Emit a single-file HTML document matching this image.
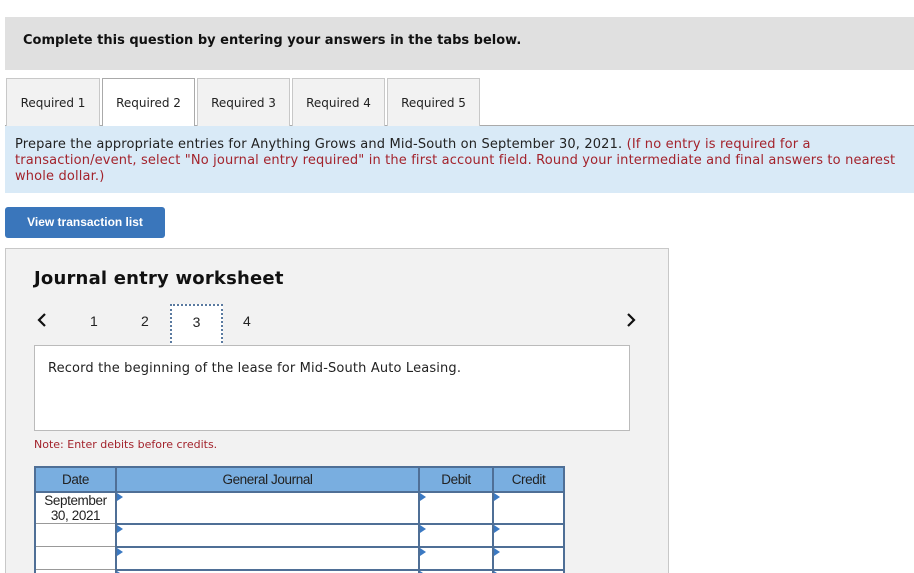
<!DOCTYPE html>
<html><head><meta charset="utf-8"><style>
*{margin:0;padding:0;box-sizing:border-box}
html,body{width:914px;height:573px;overflow:hidden}
body{background:#fff;font-family:"DejaVu Sans","Liberation Sans",sans-serif;position:relative;color:#222}
.a{position:absolute}
.tab{position:absolute;top:78px;height:48px;border:1px solid #c8c8c8;border-bottom:none;background:#f2f2f2;font-size:12px;line-height:48px;text-align:center;color:#222}
.ar{font-family:"Liberation Sans",Arial,sans-serif}
td{border:2px solid #4f6f96;padding:0;position:relative}
.tri{position:absolute;left:0;top:0;width:0;height:0;border-left:6px solid #3b79c2;border-top:4px solid transparent;border-bottom:4px solid transparent}
</style></head><body>
<div class="a" style="left:5px;top:17px;width:909px;height:53px;background:#e0e0e0"></div>
<div class="a" style="left:23px;top:33px;font-size:13px;font-weight:bold;color:#111">Complete this question by entering your answers in the tabs below.</div>
<div class="a" style="left:5px;top:125px;width:909px;height:1px;background:#aaa"></div>
<div class="tab" style="left:6px;width:94px">Required 1</div>
<div class="tab" style="left:102px;width:93px;background:#fff;height:49px;border-color:#aaa">Required 2</div>
<div class="tab" style="left:197px;width:93px">Required 3</div>
<div class="tab" style="left:292px;width:93px">Required 4</div>
<div class="tab" style="left:387px;width:93px">Required 5</div>
<div class="a" style="left:5px;top:126px;width:909px;height:67px;background:#d9eaf7"></div>
<div class="a" style="left:15px;top:137px;width:895px;font-size:13px;line-height:16px;color:#222;letter-spacing:0.15px">Prepare the appropriate entries for Anything Grows and Mid-South on September 30, 2021. <span style="color:#a3232c">(If no entry is required for a transaction/event, select "No journal entry required" in the first account field. Round your intermediate and final answers to nearest whole dollar.)</span></div>
<div class="a ar" style="left:5px;top:207px;width:160px;height:31px;background:#3a76bb;border-radius:3px;color:#fff;font-weight:bold;font-size:12px;line-height:30px;text-align:center">View transaction list</div>
<div class="a" style="left:5px;top:248px;width:664px;height:340px;background:#f2f2f2;border:1px solid #c8c8c8"></div>
<div class="a" style="left:34px;top:268px;font-size:18px;font-weight:bold;color:#111;letter-spacing:0.2px">Journal entry worksheet</div>
<svg class="a" style="left:36px;top:312px" width="12" height="16"><path d="M9 2 L3 8 L9 14" stroke="#111" stroke-width="2.2" fill="none"/></svg>
<svg class="a" style="left:625px;top:312px" width="12" height="16"><path d="M3 2 L9 8 L3 14" stroke="#111" stroke-width="2.2" fill="none"/></svg>
<div class="a ar" style="left:90px;top:313px;font-size:14px">1</div>
<div class="a ar" style="left:141px;top:313px;font-size:14px">2</div>
<div class="a ar" style="left:170px;top:304px;width:53px;height:43px;border:2px dotted #5a7aa0;background:#fff;font-size:14px;text-align:center;line-height:32px">3</div>
<div class="a ar" style="left:243px;top:313px;font-size:14px">4</div>
<div class="a" style="left:34px;top:345px;width:596px;height:86px;background:#fff;border:1px solid #bbb"></div>
<div class="a" style="left:48px;top:361px;font-size:13px;letter-spacing:0.15px">Record the beginning of the lease for Mid-South Auto Leasing.</div>
<div class="a" style="left:34px;top:438px;font-size:11px;color:#a3232c">Note: Enter debits before credits.</div>
<table class="a ar" style="left:34px;top:466px;border-collapse:collapse;font-size:13.5px;letter-spacing:-0.4px;color:#222">
<tr style="background:#79aee0;height:25px;text-align:center"><td style="width:81px">Date</td><td style="width:303px">General Journal</td><td style="width:74px">Debit</td><td style="width:71px">Credit</td></tr>
<tr style="height:31px;background:#fff"><td style="text-align:center;line-height:15px;border:1px solid #999;border-left:2px solid #4f6f96">September<br>30, 2021</td><td><span class="tri"></span></td><td><span class="tri"></span></td><td><span class="tri"></span></td></tr>
<tr style="height:23px;background:#fff"><td style="border:1px solid #999;border-left:2px solid #4f6f96"></td><td><span class="tri"></span></td><td><span class="tri"></span></td><td><span class="tri"></span></td></tr>
<tr style="height:23px;background:#fff"><td style="border:1px solid #999;border-left:2px solid #4f6f96"></td><td><span class="tri"></span></td><td><span class="tri"></span></td><td><span class="tri"></span></td></tr>
<tr style="height:23px;background:#fff"><td style="border:1px solid #999;border-left:2px solid #4f6f96"></td><td><span class="tri"></span></td><td><span class="tri"></span></td><td><span class="tri"></span></td></tr>
</table>
</body></html>
